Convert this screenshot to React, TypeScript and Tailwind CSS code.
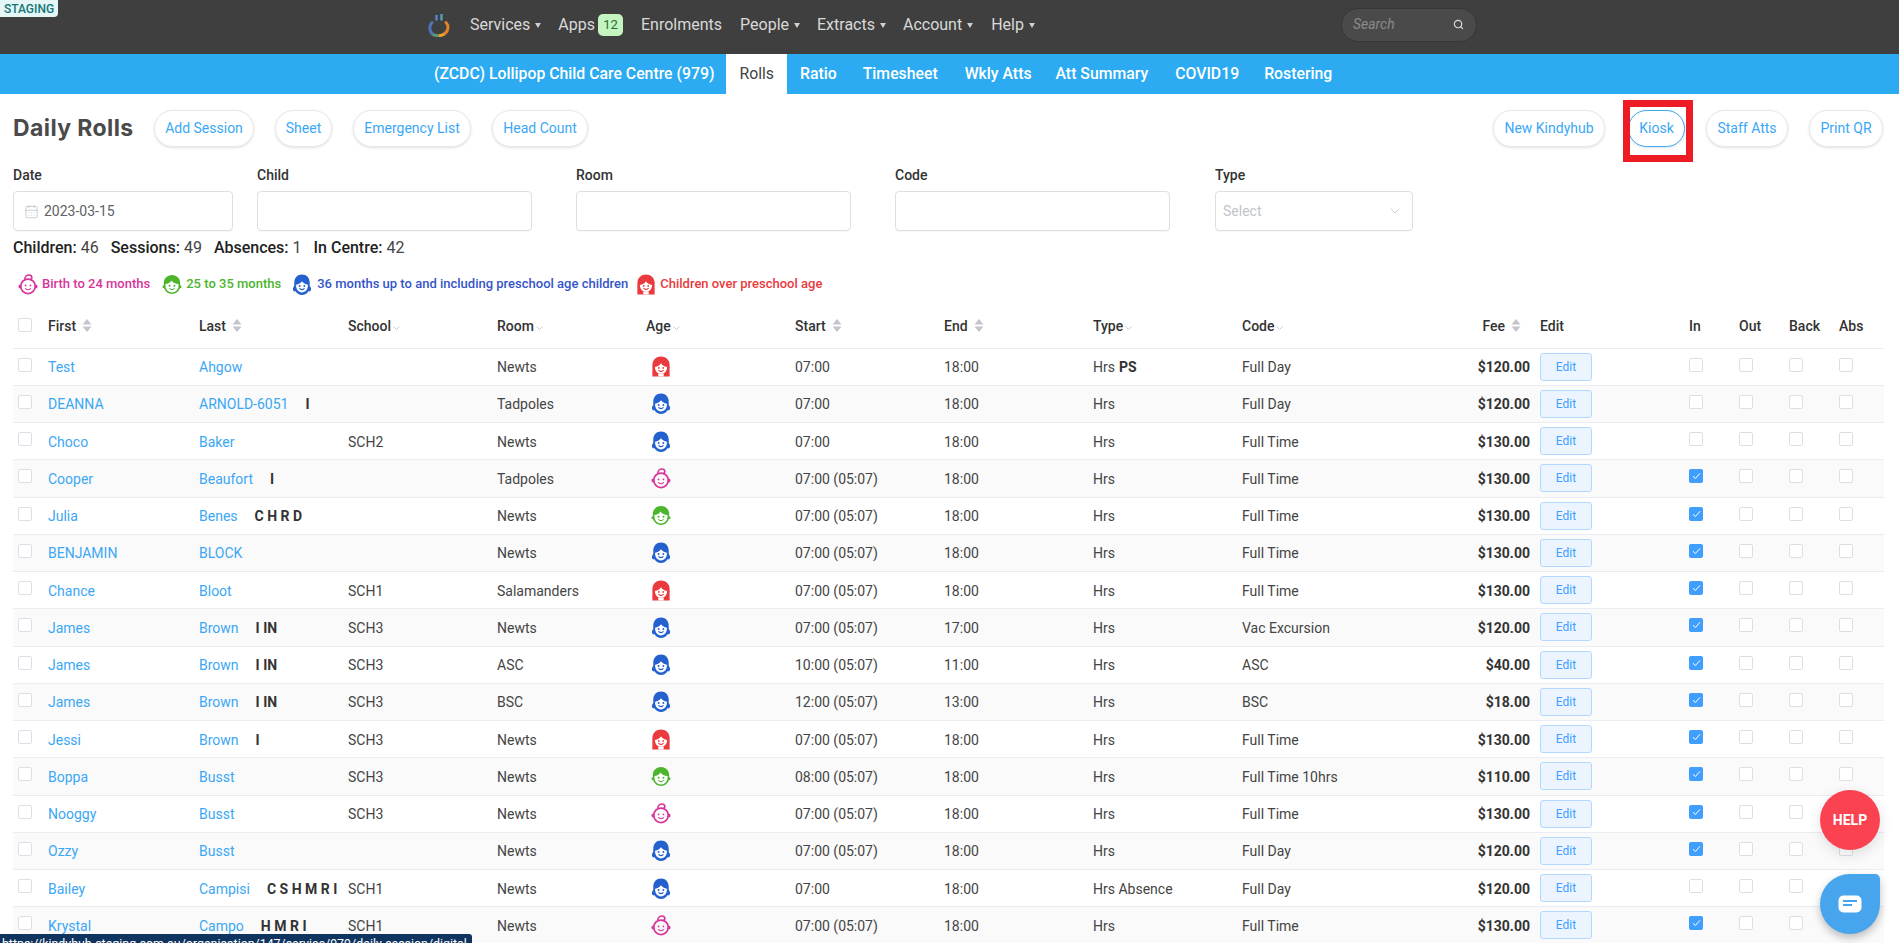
import { Search, CalendarDays, ChevronDown } from "lucide-react";

type Row = {
  first: string;
  last: string;
  flags?: string;
  school?: string;
  room: string;
  age: "baby" | "boy" | "girl" | "older";
  start: string;
  end: string;
  type: string;
  ps?: boolean;
  code: string;
  fee: string;
  inn?: boolean;
};

const rows: Row[] = [
  { first: "Test", last: "Ahgow", room: "Newts", age: "older", start: "07:00", end: "18:00", type: "Hrs", ps: true, code: "Full Day", fee: "$120.00" },
  { first: "DEANNA", last: "ARNOLD-6051", flags: "I", room: "Tadpoles", age: "girl", start: "07:00", end: "18:00", type: "Hrs", code: "Full Day", fee: "$120.00" },
  { first: "Choco", last: "Baker", school: "SCH2", room: "Newts", age: "girl", start: "07:00", end: "18:00", type: "Hrs", code: "Full Time", fee: "$130.00" },
  { first: "Cooper", last: "Beaufort", flags: "I", room: "Tadpoles", age: "baby", start: "07:00 (05:07)", end: "18:00", type: "Hrs", code: "Full Time", fee: "$130.00", inn: true },
  { first: "Julia", last: "Benes", flags: "C H R D", room: "Newts", age: "boy", start: "07:00 (05:07)", end: "18:00", type: "Hrs", code: "Full Time", fee: "$130.00", inn: true },
  { first: "BENJAMIN", last: "BLOCK", room: "Newts", age: "girl", start: "07:00 (05:07)", end: "18:00", type: "Hrs", code: "Full Time", fee: "$130.00", inn: true },
  { first: "Chance", last: "Bloot", school: "SCH1", room: "Salamanders", age: "older", start: "07:00 (05:07)", end: "18:00", type: "Hrs", code: "Full Time", fee: "$130.00", inn: true },
  { first: "James", last: "Brown", flags: "I IN", school: "SCH3", room: "Newts", age: "girl", start: "07:00 (05:07)", end: "17:00", type: "Hrs", code: "Vac Excursion", fee: "$120.00", inn: true },
  { first: "James", last: "Brown", flags: "I IN", school: "SCH3", room: "ASC", age: "girl", start: "10:00 (05:07)", end: "11:00", type: "Hrs", code: "ASC", fee: "$40.00", inn: true },
  { first: "James", last: "Brown", flags: "I IN", school: "SCH3", room: "BSC", age: "girl", start: "12:00 (05:07)", end: "13:00", type: "Hrs", code: "BSC", fee: "$18.00", inn: true },
  { first: "Jessi", last: "Brown", flags: "I", school: "SCH3", room: "Newts", age: "older", start: "07:00 (05:07)", end: "18:00", type: "Hrs", code: "Full Time", fee: "$130.00", inn: true },
  { first: "Boppa", last: "Busst", school: "SCH3", room: "Newts", age: "boy", start: "08:00 (05:07)", end: "18:00", type: "Hrs", code: "Full Time 10hrs", fee: "$110.00", inn: true },
  { first: "Nooggy", last: "Busst", school: "SCH3", room: "Newts", age: "baby", start: "07:00 (05:07)", end: "18:00", type: "Hrs", code: "Full Time", fee: "$130.00", inn: true },
  { first: "Ozzy", last: "Busst", room: "Newts", age: "girl", start: "07:00 (05:07)", end: "18:00", type: "Hrs", code: "Full Day", fee: "$120.00", inn: true },
  { first: "Bailey", last: "Campisi", flags: "C S H M R I", school: "SCH1", room: "Newts", age: "girl", start: "07:00", end: "18:00", type: "Hrs Absence", code: "Full Day", fee: "$120.00" },
  { first: "Krystal", last: "Campo", flags: "H M R I", school: "SCH1", room: "Newts", age: "baby", start: "07:00 (05:07)", end: "18:00", type: "Hrs", code: "Full Time", fee: "$130.00", inn: true },
];

function AgeIcon({ age }: { age: Row["age"] }) {
  if (age === "baby") {
    return (
      <svg width="20" height="21" viewBox="1 0.5 22 23" fill="none">
        <circle cx="12" cy="14" r="8" stroke="#d6359b" strokeWidth="2" />
        <rect x="1.6" y="12.2" width="3" height="4" rx="1.5" fill="#d6359b" />
        <rect x="19.4" y="12.2" width="3" height="4" rx="1.5" fill="#d6359b" />
        <path d="M8.5 6.5C8.5 3 11 1.5 13 1.5s3.2 1.4 3.2 2.8c0 1.3-1 2.2-2.2 2.2" stroke="#d6359b" strokeWidth="1.8" />
        <circle cx="9.3" cy="13" r="1" fill="#d6359b" />
        <circle cx="14.7" cy="13" r="1" fill="#d6359b" />
        <path d="M9.2 16.5q2.8 2.6 5.6 0" stroke="#d6359b" strokeWidth="1.2" strokeLinecap="round" />
      </svg>
    );
  }
  if (age === "boy") {
    return (
      <svg width="20" height="21" viewBox="1 0.5 22 23">
        <path d="M12 1.5c-5.5 0-9 4-9 9v2.2c-1 .3-1.5 1-1.5 1.8s.6 1.5 1.8 1.7C4.8 20 8 22.5 12 22.5s7.2-2.5 8.7-6.3c1.2-.2 1.8-.9 1.8-1.7s-.5-1.5-1.5-1.8V10.5c0-5-3.5-9-9-9z" fill="#4cb52c" />
        <path d="M4.8 11.500c2.800-.3 5.200-1.600 6.700-4 1.500 2.300 4.200 3.700 7.700 4v1.500c0 4.300-3.200 7.700-7.200 7.700s-7.200-3.400-7.200-7.700z" fill="#fff" />
        <circle cx="9.3" cy="13.5" r="1.100" fill="#4cb52c" />
        <circle cx="14.7" cy="13.5" r="1.100" fill="#4cb52c" />
        <path d="M9.5 16.5q2.500 2.200 5 0" stroke="#4cb52c" strokeWidth="1.2" fill="none" strokeLinecap="round" />
      </svg>
    );
  }
  if (age === "girl") {
    return (
      <svg width="20" height="21" viewBox="1 0.5 22 23">
        <path d="M12 1c-5 0-8.500 3.800-8.500 9v3.500c0 1-1.500 1.500-1.500 3.500 0 2.500 2 3 3 2.500C6.500 22.500 9 23.500 12 23.500s5.500-1 7-4c1 .5 3 0 3-2.500 0-2-1.500-2.500-1.500-3.500V10c0-5.200-3.500-9-8.500-9z" fill="#2461cf" />
        <path d="M5.500 12.200c2.800-.3 5.200-1.500 6.500-3.700 1.300 2.200 3.700 3.400 6.500 3.700v1.300c0 4-2.900 7.200-6.500 7.200s-6.500-3.200-6.500-7.200z" fill="#fff" />
        <circle cx="9.4" cy="13.6" r="1.100" fill="#2461cf" />
        <circle cx="14.6" cy="13.6" r="1.100" fill="#2461cf" />
        <path d="M9.6 16.500q2.400 2.200 4.800 0" stroke="#2461cf" strokeWidth="1.2" fill="none" strokeLinecap="round" />
      </svg>
    );
  }
  return (
    <svg width="20" height="21" viewBox="1 0.5 22 23">
      <path d="M12 1c-5 0-9.500 3.500-9.500 9.500V23h19V10.500C21.500 4.500 17 1 12 1z" fill="#ea3a3d" />
      <path d="M5.300 12.500c3-.5 5.300-1.800 6.700-4.200 1.400 2.400 3.700 3.700 6.700 4.200 0 4.300-2.900 7.600-6.700 7.600s-6.700-3.300-6.700-7.600z" fill="#fff" />
      <circle cx="9.6" cy="13.6" r="1" fill="#ea3a3d" />
      <circle cx="14.4" cy="13.6" r="1" fill="#ea3a3d" />
      <path d="M9.500 16.200q2.500 2.300 5 0" stroke="#ea3a3d" strokeWidth="1.2" fill="none" strokeLinecap="round" />
      <path d="M9 20h6v3H9z" fill="#fff" />
    </svg>
  );
}

function SortArrows() {
  return (
    <svg width="10" height="13" viewBox="0 0 10 13" className="ml-[6px] inline-block align-[-1px]">
      <path d="M5 0l4.500 5.500h-9z" fill="#c3c5cd" />
      <path d="M5 13L.5 7.500h9z" fill="#c3c5cd" />
    </svg>
  );
}

function FilterCaret() {
  return (
    <svg width="7" height="4" viewBox="0 0 7 4" className="ml-[2px] inline-block align-[1px]">
      <path d="M.5.500l3 3 3-3" stroke="#b9bcc6" strokeWidth=".8" fill="none" />
    </svg>
  );
}

function Box({ checked }: { checked?: boolean }) {
  if (checked) {
    return (
      <span className="flex h-[14px] w-[14px] items-center justify-center rounded-[2px] bg-[#409eff]">
        <svg width="9" height="8" viewBox="0 0 9 8">
          <path d="M1 4.200l2.400 2.300L8 1.300" stroke="#fff" strokeWidth="1" fill="none" />
        </svg>
      </span>
    );
  }
  return <span className="block h-[14px] w-[14px] rounded-[2px] border border-[#dcdfe6] bg-white" />;
}

function PillButton({ label, width, active }: { label: string; width: string; active?: boolean }) {
  return (
    <button
      className={`h-[37px] rounded-[19px] border bg-white text-[14px] text-[#3ba7f5] shadow-[0_1px_3px_rgba(0,0,0,0.12)] ${width} ${
        active ? "border-[#3ba7f5]" : "border-[#e8e8ec]"
      }`}
    >
      {label}
    </button>
  );
}

function Caret() {
  return <span className="ml-[5px] inline-block h-0 w-0 border-x-[3.5px] border-t-[5px] border-x-transparent border-t-[#cfcfcf] align-[2px]" />;
}

function Logo() {
  return (
    <svg width="22" height="24" viewBox="0 0 22 24" fill="none" className="mr-[20px]">
      <path d="M4 9.500C.5 13 1.500 19 5 21.500" stroke="#4f74b8" strokeWidth="3" strokeLinecap="round" />
      <path d="M5 21.500c1.500 1 3.500 1.200 5.500 1.200" stroke="#5d9a72" strokeWidth="3" />
      <path d="M10.500 22.700c2.500 0 4.500-.7 6.500-2.200" stroke="#e3a52b" strokeWidth="3" />
      <path d="M17 20.500c3.500-3 4-8 1-11" stroke="#e2822a" strokeWidth="3" strokeLinecap="round" />
      <path d="M8.500 2v5.500" stroke="#5a86c9" strokeWidth="2.4" />
      <path d="M13.500 1v6.500" stroke="#4fa3b8" strokeWidth="2.4" />
    </svg>
  );
}

function Field({ label, width, children }: { label: string; width: string; children?: React.ReactNode }) {
  return (
    <div className={width}>
      <div className="mb-[11px] h-[10px] text-[14px] font-medium leading-[10px] text-[#333]">{label}</div>
      <div className="flex h-[40px] items-center rounded-[4px] border border-[#dcdfe6] bg-white px-[7px] text-[14px] shadow-[0_1px_1px_rgba(0,0,0,0.03)]">
        {children}
      </div>
    </div>
  );
}

const thCls = "pb-[3px] text-left text-[14px] font-medium text-[#333]";
const tdCls = "pt-[2px]";

export default function App() {
  return (
    <div className="relative h-screen w-full overflow-hidden bg-white font-['Roboto',sans-serif] text-[14px] text-[#444]">
      <div className="absolute left-0 top-0 z-10 flex h-[17px] w-[58px] items-center justify-center rounded-br-[4px] bg-[#e4f6f6] text-[12px] font-medium text-[#14757a]">
        STAGING
      </div>

      {/* top nav */}
      <div className="flex h-[54px] items-center bg-[#3f3f3f] pb-[5px] pl-[428px] text-[16px] text-[#d9d9d9]">
        <Logo />
        <span className="mr-[17px]">Services<Caret /></span>
        <span>Apps</span>
        <span className="ml-[3px] mr-[18px] flex h-[22px] w-[25px] items-center justify-center rounded-[5px] bg-[#c4f5c0] text-[13px] text-[#1f6b33]">12</span>
        <span className="mr-[18px]">Enrolments</span>
        <span className="mr-[17px]">People<Caret /></span>
        <span className="mr-[17px]">Extracts<Caret /></span>
        <span className="mr-[18px]">Account<Caret /></span>
        <span>Help<Caret /></span>
        <div className="ml-[306px] flex h-[34px] w-[136px] items-center justify-between rounded-[17px] border border-[#363636] bg-[#4a4a4a] pl-[11px] pr-[12px]">
          <span className="text-[14px] italic text-[#8a8a8a]">Search</span>
          <Search size={11} className="text-[#dcdcdc]" strokeWidth={2.5} />
        </div>
      </div>

      {/* sub nav */}
      <div className="flex h-[40px] items-center bg-[#2cabf2] pl-[434px] text-[15.8px] font-medium text-white">
        <span className="mr-[12px]">(ZCDC) Lollipop Child Care Centre (979)</span>
        <span className="flex h-full items-center bg-white px-[13px] font-normal text-[#444]">Rolls</span>
        <span className="ml-[13px] mr-[26px]">Ratio</span>
        <span className="mr-[27px]">Timesheet</span>
        <span className="mr-[24px]">Wkly Atts</span>
        <span className="mr-[27px]">Att Summary</span>
        <span className="mr-[25px]">COVID19</span>
        <span>Rostering</span>
      </div>

      {/* heading row */}
      <div className="relative mt-[16px] flex h-[37px] items-center px-[13px]">
        <h1 className="mr-[21px] w-[120px] whitespace-nowrap font-['Inter',sans-serif] text-[23px] font-bold tracking-[0.4px] text-[#4a4a4a]">Daily Rolls</h1>
        <div className="flex gap-[21px]">
          <PillButton label="Add Session" width="w-[100px]" />
          <PillButton label="Sheet" width="w-[57px]" />
          <PillButton label="Emergency List" width="w-[118px]" />
          <PillButton label="Head Count" width="w-[96px]" />
        </div>
        <div className="ml-auto flex gap-[21px] pr-[3px]">
          <PillButton label="New Kindyhub" width="w-[112px]" />
          <div className="relative ml-[2px]">
            <PillButton label="Kiosk" width="w-[57px]" active />
            <span className="absolute -bottom-[15px] -left-[5px] -right-[8px] -top-[10px] border-[7px] border-[#ed1c24]" />
          </div>
          <PillButton label="Staff Atts" width="w-[82px]" />
          <PillButton label="Print QR" width="w-[74px]" />
        </div>
      </div>

      {/* filters */}
      <div className="ml-[13px] mt-[23px] flex gap-[44px]">
        <Field label="Date" width="w-[220px] -mr-[20px]">
          <CalendarDays size={15} className="ml-[3px] text-[#c0c4cc]" strokeWidth={1.3} />
          <span className="ml-[5px] text-[#606266]">2023-03-15</span>
        </Field>
        <Field label="Child" width="w-[275px]" />
        <Field label="Room" width="w-[275px]" />
        <Field label="Code" width="w-[275px]" />
        <Field label="Type" width="w-[198px] ml-[1px]">
          <span className="text-[14px] text-[#c0c4cc]">Select</span>
          <ChevronDown size={16} className="ml-auto mr-[2px] text-[#c0c4cc]" strokeWidth={1.2} />
        </Field>
      </div>

      <div className="ml-[13px] mt-[8px] flex h-[17px] items-center gap-[12px] text-[16px] text-[#444]">
        <span><b className="font-medium text-[#222]">Children:</b> 46</span>
        <span><b className="font-medium text-[#222]">Sessions:</b> 49</span>
        <span><b className="font-medium text-[#222]">Absences:</b> 1</span>
        <span><b className="font-medium text-[#222]">In Centre:</b> 42</span>
      </div>

      {/* legend */}
      <div className="ml-[18px] mt-[18px] flex h-[20px] items-center text-[13px] font-medium">
        <AgeIcon age="baby" />
        <span className="ml-[4px] mr-[12px] text-[#d6359b]">Birth to 24 months</span>
        <AgeIcon age="boy" />
        <span className="ml-[4px] mr-[11px] text-[#4cb52c]">25 to 35 months</span>
        <AgeIcon age="girl" />
        <span className="ml-[5px] mr-[8px] text-[#3455c9]">36 months up to and including preschool age children</span>
        <AgeIcon age="older" />
        <span className="ml-[4px] text-[#ea3a3d]">Children over preschool age</span>
      </div>

      {/* table */}
      <table className="ml-[13px] mt-[14px] w-[1871px] table-fixed border-collapse">
        <colgroup>
          <col className="w-[35px]" />
          <col className="w-[151px]" />
          <col className="w-[149px]" />
          <col className="w-[149px]" />
          <col className="w-[149px]" />
          <col className="w-[149px]" />
          <col className="w-[149px]" />
          <col className="w-[149px]" />
          <col className="w-[149px]" />
          <col className="w-[149px]" />
          <col className="w-[149px]" />
          <col className="w-[149px]" />
          <col className="w-[50px]" />
          <col className="w-[50px]" />
          <col className="w-[50px]" />
          <col className="w-[45px]" />
        </colgroup>
        <thead>
          <tr className="h-[40px] border-b border-[#e9ecf3]">
            <th className="pb-[5px] pl-[5px]"><Box /></th>
            <th className={thCls}>First<SortArrows /></th>
            <th className={thCls}>Last<SortArrows /></th>
            <th className={thCls}>School<FilterCaret /></th>
            <th className={thCls}>Room<FilterCaret /></th>
            <th className={thCls}>Age<FilterCaret /></th>
            <th className={thCls}>Start<SortArrows /></th>
            <th className={thCls}>End<SortArrows /></th>
            <th className={thCls}>Type<FilterCaret /></th>
            <th className={thCls}>Code<FilterCaret /></th>
            <th className={`${thCls} pr-[19px] !text-right`}>Fee<SortArrows /></th>
            <th className={thCls}>Edit</th>
            <th className={thCls}>In</th>
            <th className={thCls}>Out</th>
            <th className={thCls}>Back</th>
            <th className={thCls}>Abs</th>
          </tr>
        </thead>
        <tbody>
          {rows.map((r, i) => (
            <tr key={i} className={`h-[37.25px] border-b border-[#e9ecf3] ${i % 2 === 1 ? "bg-[#fafafa]" : "bg-white"}`}>
              <td className="pl-[5px] pt-[9px] align-top"><Box /></td>
              <td className={`${tdCls} text-[#3ba7f5]`}>{r.first}</td>
              <td className={`${tdCls} whitespace-nowrap text-[#3ba7f5]`}>
                {r.last}
                {r.flags && <b className="ml-[17px] text-[14px] font-bold text-[#333]">{r.flags}</b>}
              </td>
              <td className={tdCls}>{r.school}</td>
              <td className={tdCls}>{r.room}</td>
              <td>
                <span className="flex w-[30px] justify-center"><AgeIcon age={r.age} /></span>
              </td>
              <td className={tdCls}>{r.start}</td>
              <td className={tdCls}>{r.end}</td>
              <td className={tdCls}>
                {r.type}
                {r.ps && <b className="ml-[4px] font-bold text-[#333]">PS</b>}
              </td>
              <td className={tdCls}>{r.code}</td>
              <td className={`${tdCls} pr-[10px] text-right font-bold text-[#333]`}>{r.fee}</td>
              <td>
                <button className="h-[28px] w-[52px] rounded-[3px] border border-[#b3d8ff] bg-[#ecf5ff] text-[12px] text-[#409eff]">Edit</button>
              </td>
              <td className="pt-[9px] align-top"><Box checked={r.inn} /></td>
              <td className="pt-[9px] align-top"><Box /></td>
              <td className="pt-[9px] align-top"><Box /></td>
              <td className="pt-[9px] align-top"><Box /></td>
            </tr>
          ))}
        </tbody>
      </table>

      {/* floating help + chat */}
      <div className="absolute left-[1820px] top-[790px] flex h-[60px] w-[60px] items-center justify-center rounded-full bg-[#fb4250] text-[14px] font-bold text-white shadow-[0_4px_14px_rgba(0,0,0,0.12)]">
        HELP
      </div>
      <div className="absolute left-[1820px] top-[874px] flex h-[60px] w-[60px] items-center justify-center rounded-[30px] rounded-tr-[5px] bg-[#46a5ec] shadow-[0_4px_8px_rgba(0,0,0,0.25)]">
        <svg width="24" height="18" viewBox="0 0 24 18">
          <rect width="23" height="17" x=".5" y=".5" rx="5" fill="#fff" />
          <path d="M5 6h14M5 10h9" stroke="#46a5ec" strokeWidth="1.8" />
        </svg>
      </div>

      {/* browser status bubble */}
      <div className="absolute bottom-0 left-0 h-[9px] w-[472px] overflow-hidden rounded-tr-[3px] bg-[#0f3460] pl-[2px] pt-[2px] text-[12.4px] leading-[16px] text-white">
        https://kindyhub-staging.com.au/organisation/147/service/979/daily-session/digital
      </div>
    </div>
  );
}
